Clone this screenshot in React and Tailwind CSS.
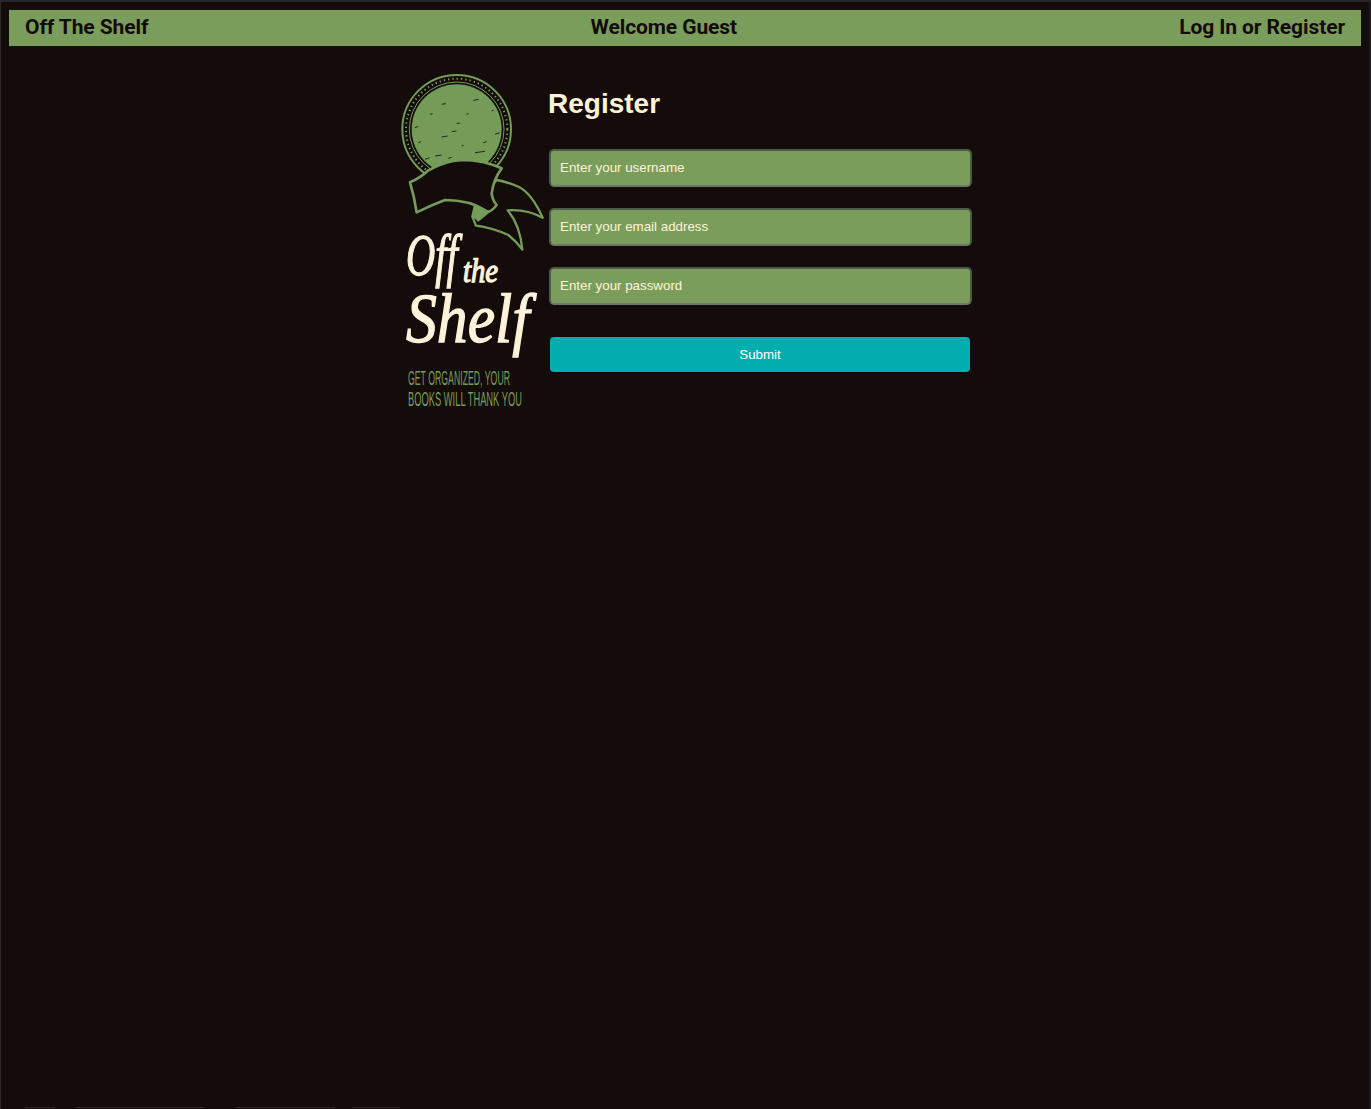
const specks = [
  [140,118,12,2],[235,106,16,3],[185,176,10,2],[60,188,10,4],[140,216,18,3],[170,200,14,2],[300,208,14,5],[265,233,10,3],
  [240,263,30,4],[160,280,10,3],[90,283,14,5],[120,273,20,3],[70,233,8,3],[215,148,6,2],[105,148,8,2],[290,138,6,3],[200,243,6,2],
];

function Logo() {
  const green = "#749c58";
  const cream = "#fdf3da";
  const dark = "#140c0b";
  return (
    <svg viewBox="15 0 438 1050" className="w-[146px] h-[350px] shrink-0 overflow-visible">
      <circle cx="185" cy="193" r="163" fill="none" stroke={green} strokeWidth="6" />
      <circle cx="185" cy="193" r="152" fill="none" stroke={green} strokeWidth="6" strokeDasharray="4 9" />
      <circle cx="185" cy="193" r="142" fill="none" stroke={green} strokeWidth="3" />
      <circle cx="185" cy="193" r="135" fill={green} />
      {specks.map(([x, y, l, t], i) => (
        <line key={i} x1={x} y1={y} x2={x + l} y2={y - t} stroke={dark} strokeWidth="2.5" />
      ))}
      <path d="M240 420 L232 455 L243 482 Q290 488 340 510 Q365 530 382 554 Q375 480 338 436 Q395 432 443 458 Q410 385 372 366 Q335 350 305 345 Z" fill={dark} stroke={green} strokeWidth="7" strokeLinejoin="round" />
      <path d="M240 415 L232 455 L250 470 L305 425 Z" fill={green} />
      <path d="M45 352 Q75 340 100 316 Q150 288 200 285 Q265 285 320 310 Q295 345 290 385 Q292 405 305 420 Q285 445 275 438 Q225 405 150 405 Q110 420 65 442 Q58 395 45 352 Z" fill={dark} stroke={green} strokeWidth="8" strokeLinejoin="round" />
      <g fontFamily="'Liberation Serif', serif" fontStyle="italic" fill={cream} stroke={cream} strokeWidth="4">
        <text x="33" y="630" fontSize="180" textLength="155" lengthAdjust="spacingAndGlyphs">Off</text>
        <text x="204" y="651" fontSize="102" textLength="105" lengthAdjust="spacingAndGlyphs">the</text>
        <text x="33" y="830" fontSize="210" textLength="370" lengthAdjust="spacingAndGlyphs">Shelf</text>
      </g>
      <g fontFamily="'Liberation Sans', sans-serif" fill={green}>
        <text x="39" y="960" fontSize="60" textLength="306" lengthAdjust="spacingAndGlyphs">GET ORGANIZED, YOUR</text>
        <text x="39" y="1022" fontSize="60" textLength="342" lengthAdjust="spacingAndGlyphs">BOOKS WILL THANK YOU</text>
      </g>
    </svg>
  );
}

function Field({ placeholder, type = "text" }) {
  return (
    <input
      type={type}
      placeholder={placeholder}
      className="block w-full h-[38px] rounded-[5px] border-2 border-[#4f5a4b] border-b-[#6d7468] bg-[#7b9d5c] pl-[9px] pr-2 pb-[2px] text-[13.33px] leading-none text-[#fff5d6] placeholder:text-[#fff5d6] placeholder:opacity-100 outline-none font-['Liberation_Sans',Arial,sans-serif]"
    />
  );
}

export default function App() {
  return (
    <div className="h-screen overflow-hidden flex flex-col bg-[#140c0b] border-t-2 border-t-[#26262c] border-l border-l-[#2b2827] border-r-2 border-r-[#1c1c22] font-['Liberation_Sans',Arial,sans-serif]">
      <header className="mt-2 ml-2 mr-2 h-9 shrink-0 flex items-center justify-between bg-[#7b9d5c] px-4 text-[21px] font-bold tracking-[-0.1px] text-[#120c08] font-['Roboto',Arial,sans-serif]">
        <span>Off The Shelf</span>
        <span>Welcome Guest</span>
        <span>Log In or Register</span>
      </header>
      <main className="mt-[19px] mx-auto flex w-[574px] pl-[2px]">
        <Logo />
        <form className="ml-[2px] flex-1 min-w-0">
          <h1 className="mt-[19px] mb-[25px] h-[40px] text-[28px] leading-[40px] font-bold text-[#fff3d6]">Register</h1>
          <div className="ml-px flex flex-col gap-[21px]">
            <Field placeholder="Enter your username" />
            <Field placeholder="Enter your email address" />
            <Field placeholder="Enter your password" type="password" />
          </div>
          <button type="button" className="mt-8 ml-[2px] block w-[420px] h-[35px] rounded-[4px] bg-[#02adb0] text-[13.33px] text-white shadow-[0_1px_1px_#000]">
            Submit
          </button>
        </form>
      </main>
      <footer className="mt-auto h-[2px] shrink-0 flex items-start pl-6">
        <span className="w-[30px] h-px bg-[#2e2927]" />
        <span className="ml-5 w-[130px] h-px bg-[#2e2927]" />
        <span className="ml-[30px] w-[100px] h-px bg-[#2e2927]" />
        <span className="ml-[17px] w-[48px] h-px bg-[#2e2927]" />
      </footer>
    </div>
  );
}
